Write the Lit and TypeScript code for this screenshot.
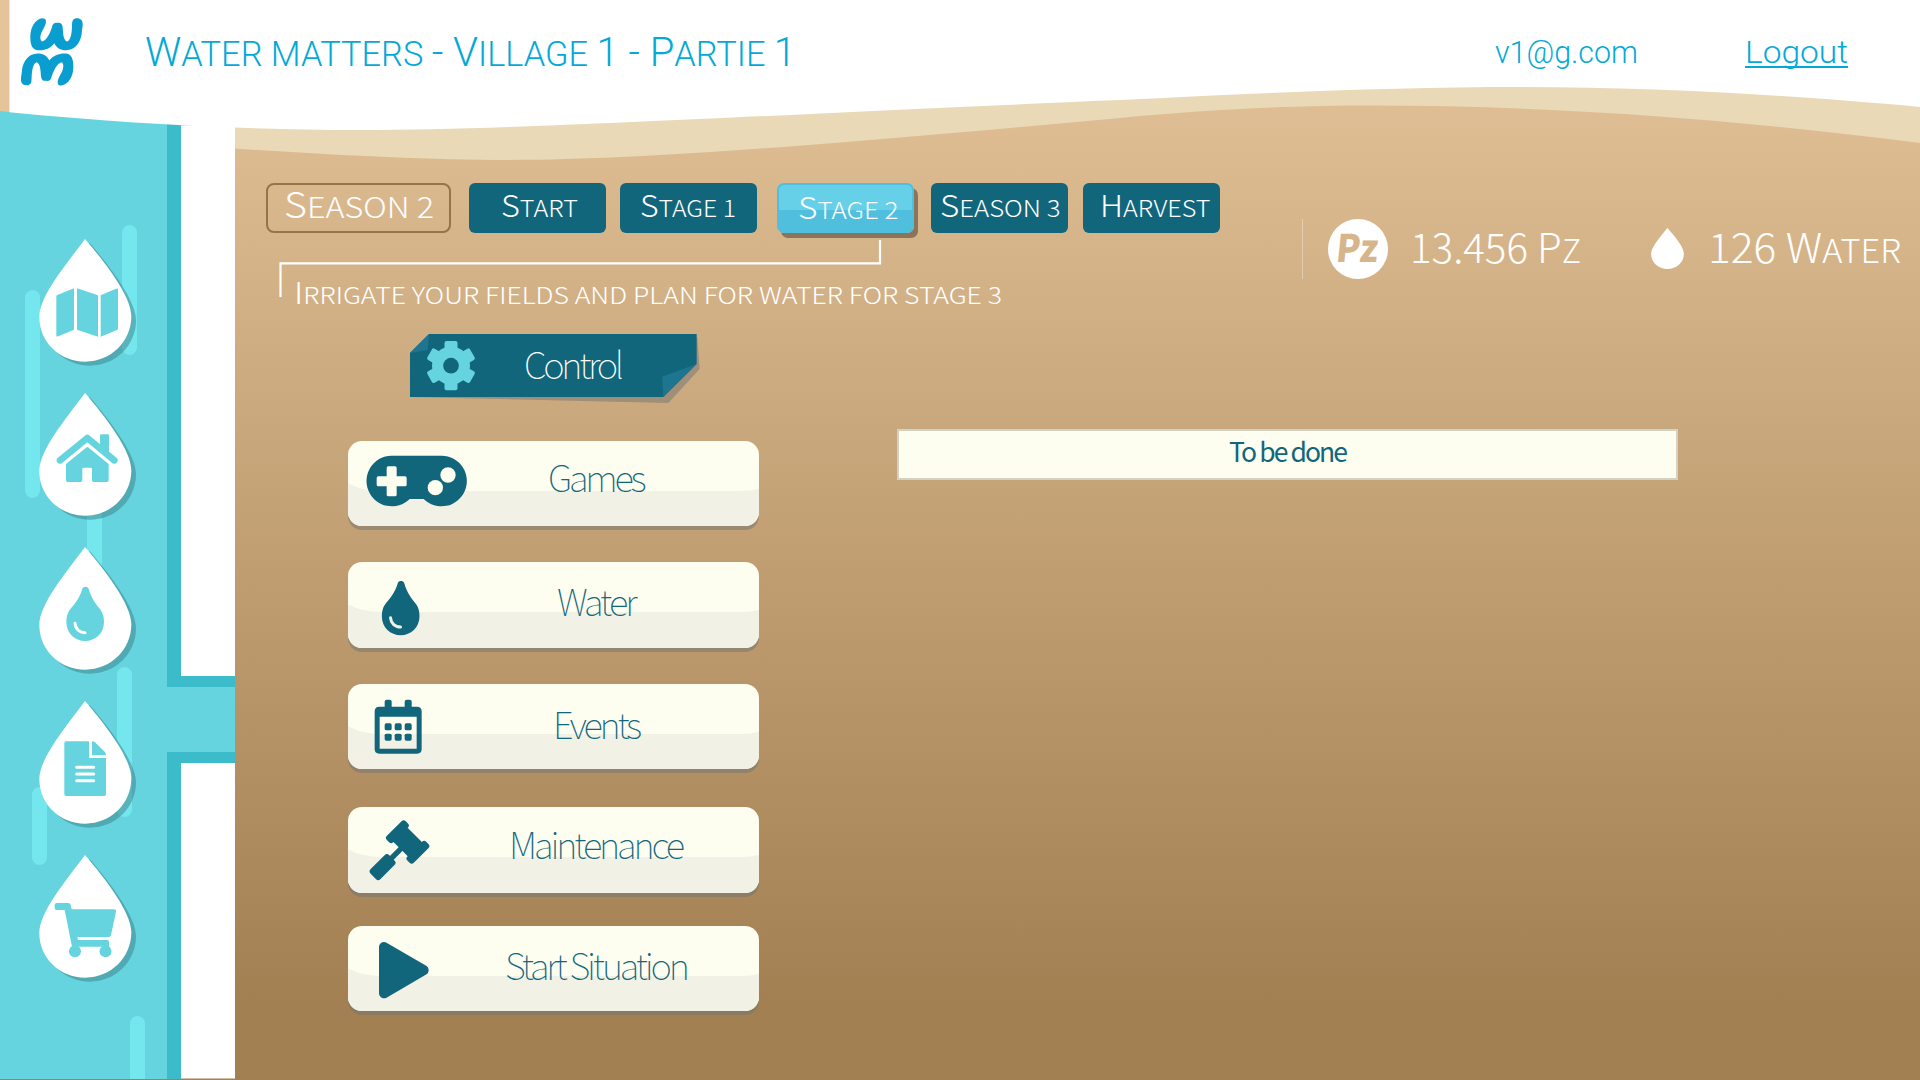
import { LitElement, html, svg, css } from "lit";
import { customElement, property } from "lit/decorators.js";

type Run = [text: string, size: number];

const BIG = 30.2;
const SMALL = 23.4;

const DROPLET =
  "M247 206C250 198 263 198 266 206C274 236 290 254 302 270C309 280 312 292 312 306C312 340 286 363 255.5 363C225 363 199 340 199 306C199 292 202 280 209 270C221 254 239 236 247 206Z";

const droplet = (shine: string) => svg`
  <path d=${DROPLET}></path>
  <path d="M225 310C226 326 238 338 255 338" fill="none" stroke=${shine} stroke-width="9" stroke-linecap="round"></path>`;

const mapIcon = svg`<g transform="translate(-117 -88)">
  <path d="M169 261Q169 257 172 256L222 236V360L175 380Q169 382 169 377Z"></path>
  <path d="M231 236L294 257V381L231 360Z"></path>
  <path d="M302 257L348 237Q354 235 354 240V356Q354 359 351 361L302 381Z"></path></g>`;

const homeIcon = svg`<g transform="translate(-117 -549)">
  <path d="M180 751L262 684L343 751" fill="none" stroke="#65d4df" stroke-width="20" stroke-linejoin="round" stroke-linecap="round"></path>
  <path d="M304 673H323Q327 673 327 677V736L300 714V677Q300 673 304 673Z"></path>
  <path d="M198 762L258 713Q262 709 266 713L326 762V811Q326 816 321 816H281Q276 816 276 811V777Q276 773 272 773H251Q247 773 247 777V811Q247 816 242 816H203Q198 816 198 811Z"></path></g>`;

const waterIcon = svg`<g transform="translate(-117 -81)">${droplet("#fff")}</g>`;

const docIcon = svg`<g transform="translate(-117 -543)">
  <path d="M198 664H267V710Q267 714 271 714H318V823Q318 828 313 828H198Q193 828 193 823V669Q193 664 198 664Z"></path>
  <path d="M276 664Q281 664 285 667L314 695Q318 699 318 706H276Z"></path>
  <path d="M230 741.5H281M230 762H281M230 782H281" stroke="#fff" stroke-width="9" stroke-linecap="round"></path></g>`;

const cartIcon = svg`<g transform="translate(-117 -165)">
  <path d="M170 309H204Q211 309 212 315L215 328H342Q349 328 348 335L333 405Q332 411 326 411H232L234 420H322Q327 420 327 425V440H216L194 330H170Q164 330 164 324V315Q164 309 170 309Z"></path>
  <circle cx="225" cy="454" r="18"></circle><circle cx="316.500" cy="454" r="18"></circle></g>`;

const gamesIcon = svg`<g transform="translate(-52 -62)">
  <path d="M182 106H333A76 76 0 1 1 279 236H237A76 76 0 1 1 182 106Z"></path>
  <g fill="#fdfdf0"><rect x="138" y="168" width="90" height="30" rx="5"></rect><rect x="168" y="138" width="30" height="90" rx="5"></rect>
  <circle cx="352" cy="164" r="23"></circle><circle cx="314" cy="202" r="23"></circle></g></g>`;

const waterBtnIcon = svg`<g transform="translate(-97.500 -143)">${droplet("#f1f1e5")}</g>`;

const calendarIcon = svg`<g transform="translate(-52 -40)">
  <path fill-rule="evenodd" d="M146 108H259Q273 108 273 122V235Q273 249 259 249H146Q132 249 132 235V122Q132 108 146 108ZM147 138V234H258V138Z"></path>
  <rect x="162" y="87" width="21" height="30" rx="6"></rect><rect x="222" y="87" width="21" height="30" rx="6"></rect>
  ${[162, 192, 222].map((x) => [158, 189].map((y) => svg`<rect x=${x} y=${y} width="21" height="21" rx="5"></rect>`))}</g>`;

const gavelIcon = svg`<g transform="translate(179 105) rotate(45)">
  <rect x="-57" y="-40" width="27" height="80" rx="9"></rect><rect x="30" y="-40" width="27" height="80" rx="9"></rect>
  <rect x="-40" y="-30" width="80" height="60"></rect><rect x="-8" y="20" width="16" height="60"></rect>
  <rect x="-21" y="67" width="42" height="79" rx="10"></rect></g>`;

const playIcon = svg`<path transform="translate(-52 -138)" d="M160 201L279 270.500L160 340Z" stroke="#11667c" stroke-width="30" stroke-linejoin="round"></path>`;

const gearIcon = svg`<g transform="translate(123 95)" fill="#65d4df">
  ${[0, 60, 120, 180, 240, 300].map((a) => svg`<rect x="-19.500" y="-74" width="39" height="40" rx="6" transform="rotate(${a})"></rect>`)}
  <circle r="57"></circle><circle r="23.500" fill="#11667c"></circle></g>`;

@customElement("wm-label")
export class WmLabel extends LitElement {
  static styles = css`
    :host { display: block; flex: none; }
    svg { display: block; overflow: visible; }
    text { font-family: "Noto Sans CJK SC", "Source Sans Pro", sans-serif; fill: currentColor; white-space: pre; }
    .caps { text-transform: uppercase; }
    .din { font-family: Roboto, sans-serif; }
  `;
  @property({ attribute: false }) runs: Run[] = [];
  @property({ type: Number }) span = 100;
  @property({ type: Number }) weight = 300;
  @property() face = "caps";
  @property() adjust = "spacingAndGlyphs";

  render() {
    return html`<svg width=${this.span} height="40"><text y="30" class=${this.face} font-weight=${this.weight} textLength=${this.span} lengthAdjust=${this.adjust}>${this.runs.map(([t, s]) => svg`<tspan font-size=${s}>${t}</tspan>`)}</text></svg>`;
  }
}

interface Stage { runs: Run[]; span: number; gap: number; pad: number; active?: boolean }
const STAGES: Stage[] = [
  { runs: [["S", BIG], ["tart", SMALL]], span: 77, gap: 18.4, pad: 31.5 },
  { runs: [["S", BIG], ["tage 1", SMALL]], span: 96, gap: 14.4, pad: 20 },
  { runs: [["S", BIG], ["tage 2", SMALL]], span: 100.5, gap: 20, pad: 21, active: true },
  { runs: [["S", BIG], ["eason 3", SMALL]], span: 120.5, gap: 17.6, pad: 8.5 },
  { runs: [["H", BIG], ["arvest", SMALL]], span: 110.5, gap: 15.5, pad: 17 },
];

const ACTIONS = [
  { text: "Games", span: 98.5, base: 51, gap: 0, icon: gamesIcon },
  { text: "Water", span: 80.5, base: 53.7, gap: 36, icon: waterBtnIcon },
  { text: "Events", span: 89, base: 55.5, gap: 36, icon: calendarIcon },
  { text: "Maintenance", span: 176, base: 51.7, gap: 38, icon: gavelIcon },
  { text: "Start Situation", span: 185, base: 53.9, gap: 33.2, icon: playIcon },
];

const WM = "M127 55C105 57 90 85 91 112C91 135 97 149 112 151C135 152 150 146 163 130C170 144 180 151 198 151C225 150 240 130 245 103C245 92 249 80 248 70C247 58 236 54 226 56C214 60 217 72 216 82C215 100 212 122 201 125C192 122 190 108 189 95C188 80 188 70 176 69C162 67 158 72 156 82C150 100 140 122 126 125C119 122 120 105 126 95C131 84 138 76 138 65C138 57 134 55 127 55Z";
const DROP = "M138 0C80 78 1 172 1 234C1 310 63 368 139 368C215 368 277 308 277 232C277 172 200 72 138 0Z";

@customElement("app-root")
export class AppRoot extends LitElement {
  static styles = css`
    :host { display: block; }
    .page {
      position: relative; width: 1920px; height: 1080px; overflow: hidden;
      display: grid; grid-template: 160px 920px / 235px 1685px;
      background: linear-gradient(#e7c59c 0, #a28052 1000px);
      color: #fff;
    }
    .scene { position: absolute; inset: 0; }
    svg { display: block; flex: none; }
    header, nav, main { position: relative; }
    header { grid-column: 1 / -1; display: flex; align-items: flex-start; color: #05a9d8; }
    .logo { margin: 18px 0 0 21px; }
    .title { margin: 35.800px 0 0 62px; }
    .mail { margin: 33.300px 0 0 auto; }
    .logout { margin: 33.300px 72px 0 107px; height: 32.700px; border-bottom: 2px solid #05a9d8; }
    nav { display: flex; flex-direction: column; gap: 24px; padding: 79.300px 0 0 39.400px; }
    main { display: flex; flex-direction: column; }
    .top { display: flex; height: 174px; }
    .progress { padding: 23px 0 0 31px; width: 1066.500px; box-sizing: border-box; }
    .stages { display: flex; height: 50px; }
    .season { width: 185px; box-sizing: border-box; border: 2px solid #93744b; border-radius: 8px; padding: 3.400px 0 0 16px; }
    .stage { width: 136.600px; box-sizing: border-box; border-radius: 6px; background: #11667c; padding-top: 4px; flex: none; }
    .stage.active {
      border: 2px solid #50bfde; padding-top: 4.300px; border-radius: 7px;
      background: linear-gradient(#65d0e7 0 25px, #50bfde 25px);
      box-shadow: 4px 5px 0 #8b7559;
    }
    .hint { display: grid; margin-top: 7px; }
    .hint > * { grid-area: 1 / 1; }
    .hint-text { margin: 34px 0 0 28px; }
    .status { display: flex; padding-top: 59px; align-items: flex-start; }
    .rule { width: 1px; height: 60px; background: rgba(255, 255, 255, 0.35); }
    .coin { width: 60px; height: 60px; border-radius: 50%; background: #fff; color: #d7b58b; margin: 0 22.500px 0 25px; box-sizing: border-box; padding: 13px 0 0 8px; }
    .coin wm-label { transform: skewX(-6deg); }
    .amount { margin-top: 13.500px; }
    .drop { margin: 9px 23.500px 0 70px; }
    .content { display: flex; align-items: flex-start; }
    .controls { width: 524px; margin-left: 112.500px; }
    .banner { display: grid; margin-left: 62px; height: 106.800px; }
    .banner > * { grid-area: 1 / 1; }
    .banner wm-label { margin: 14.700px 0 0 114px; }
    .action { position: relative; width: 411px; height: 85.500px; border-radius: 14px; overflow: hidden; color: #11667c; }
    .lift { width: 411px; border-radius: 14px; box-shadow: 0 4px 0 rgba(116, 116, 114, 0.5); }
    .face { display: grid; align-items: start; }
    .face > * { grid-area: 1 / 1; }
    .face wm-label { justify-self: center; }
    .notice { width: 781px; height: 50.500px; margin: 95px 0 0 25px; box-sizing: border-box; border: 2px solid #d3d2c2; background: #fdfdf0; color: #11667c; display: flex; justify-content: center; }
    .notice wm-label { margin: 0.800px 0 0 2px; }
  `;

  private scene() {
    const streaks = [[122, 225, 130], [25, 290, 208], [87, 480, 100], [117, 667, 150], [32, 787, 78], [130, 1016, 80]];
    return html`<svg class="scene" width="1920" height="1080" viewBox="0 0 1920 1080">
      <path fill="#e9d9b7" d="M0 100L235 148.500C330 155 430 160 510 160C660 160 900 138 1120 118C1210 109 1300 105.500 1370 105.500C1560 105.500 1740 120 1920 143V60H0Z"></path>
      <rect x="181" y="126" width="54" height="952.500" fill="#fff"></rect>
      <rect y="100" width="181" height="979" fill="#3cbccb"></rect>
      <rect x="167" y="676" width="68" height="87" fill="#3cbccb"></rect>
      <rect y="100" width="167" height="979" fill="#65d4df"></rect>
      <rect x="160" y="687" width="75" height="65" fill="#65d4df"></rect>
      ${streaks.map(([x, y, h]) => svg`<rect x=${x} y=${y} width="15" height=${h} rx="7.500" fill="#74e6ed"></rect>`)}
      <path fill="#e6c49b" d="M0 0H10V112L0 111Z"></path>
      <path fill="#fff" d="M9.500 0V112.200C130 124 250 130 360 130C520 130 760 115 1120 100C1260 93 1390 87 1520 87C1660 87 1800 96 1920 107V0Z"></path>
      <rect y="1079" width="167" height="1" fill="#a28052"></rect>
    </svg>`;
  }

  render() {
    return html`<div class="page">
      ${this.scene()}
      <header>
        <svg class="logo" width="62" height="68" viewBox="63 54.500 186 204" fill="#0a9dd0"><path d=${WM}></path><path transform="rotate(180 155.500 156)" d=${WM}></path></svg>
        <wm-label class="title" face="caps din" .span=${651} .runs=${[["W", 40.5], ["ater matters ", 34.4], ["- V", 40.5], ["illage ", 34.4], ["1 - P", 40], ["artie ", 34.4], ["1", 40]] as Run[]}></wm-label>
        <wm-label class="mail" face="din" .span=${143} .runs=${[["v1@g.com", 32]] as Run[]}></wm-label>
        <wm-label class="logout" face="din" .span=${103} .runs=${[["Logout", 32]] as Run[]}></wm-label>
      </header>
      <nav>
        ${[mapIcon, homeIcon, waterIcon, docIcon, cartIcon].map((icon) => html`<svg width="98" height="130" viewBox="0 0 294 390">
          <path d=${DROP} transform="translate(14 12)" fill="#3c7f8a" fill-opacity=".5"></path>
          <path d=${DROP} fill="#fff"></path><g fill="#65d4df">${icon}</g></svg>`)}
      </nav>
      <main>
        <div class="top">
          <div class="progress">
            <div class="stages">
              <div class="season"><wm-label .span=${150} .runs=${[["S", 35.5], ["eason 2", 29]] as Run[]}></wm-label></div>
              ${STAGES.map((s) => html`<div class="stage ${s.active ? "active" : ""}" style="margin-left:${s.gap}px;padding-left:${s.pad - (s.active ? 2 : 0)}px"><wm-label .span=${s.span} .runs=${s.runs}></wm-label></div>`)}
            </div>
            <div class="hint">
              <svg width="620" height="60" viewBox="0 0 620 60"><path d="M14.500 57V23.300H614V0" fill="none" stroke="#fff" stroke-width="2.200"></path></svg>
              <wm-label class="hint-text" .span=${708} .runs=${[["I", BIG], ["rrigate your fields and plan for water for stage 3", SMALL]] as Run[]}></wm-label>
            </div>
          </div>
          <div class="status">
            <div class="rule"></div>
            <div class="coin"><wm-label face="" .weight=${900} .span=${42} .runs=${[["Pz", 38]] as Run[]}></wm-label></div>
            <wm-label class="amount" .span=${171} .weight=${200} .runs=${[["13.456 P", 41], ["z", 33]] as Run[]}></wm-label>
            <svg class="drop" width="33" height="41" viewBox="0 0 278 368" preserveAspectRatio="none" fill="#fff"><path d=${DROP}></path></svg>
            <wm-label class="amount" .span=${193} .weight=${200} .runs=${[["126 W", 41], ["ater", 33]] as Run[]}></wm-label>
          </div>
        </div>
        <div class="content">
          <div class="controls">
            <div class="banner">
              <svg width="292" height="70" viewBox="0 0 876 210">
                <path fill="#747472" fill-opacity=".5" d="M0 189L775 207L869 105L862 10Z"></path>
                <path fill="#11667c" d="M57 0H860V90L760 189H0V57Z"></path>
                <path fill="#1e7590" d="M57 0L0 57L53 48ZM860 90L760 189L756 128Z"></path>
                ${gearIcon}
              </svg>
              <wm-label face="" adjust="spacing" .weight=${100} .span=${100} .runs=${[["Control", 36.5]] as Run[]}></wm-label>
            </div>
            ${ACTIONS.map((a) => html`<div class="lift" style="margin-top:${a.gap}px"><div class="action face">
              <svg width="411" height="86" viewBox="0 0 1233 258" fill="#11667c">
                <rect width="1233" height="258" fill="#fdfdf0"></rect>
                <path fill="#f1f1e5" d="M0 127Q42 150 100 150H1180Q1210 150 1233 143V258H0Z"></path>${a.icon}
              </svg>
              <wm-label style="margin:${a.base - 30}px 0 0 88px" face="" adjust="spacing" .weight=${100} .span=${a.span} .runs=${[[a.text, 36.5]] as Run[]}></wm-label>
            </div></div>`)}
          </div>
          <div class="notice"><wm-label face="" adjust="spacing" .weight=${400} .span=${119} .runs=${[["To be done", 26.5]] as Run[]}></wm-label></div>
        </div>
      </main>
    </div>`;
  }
}
